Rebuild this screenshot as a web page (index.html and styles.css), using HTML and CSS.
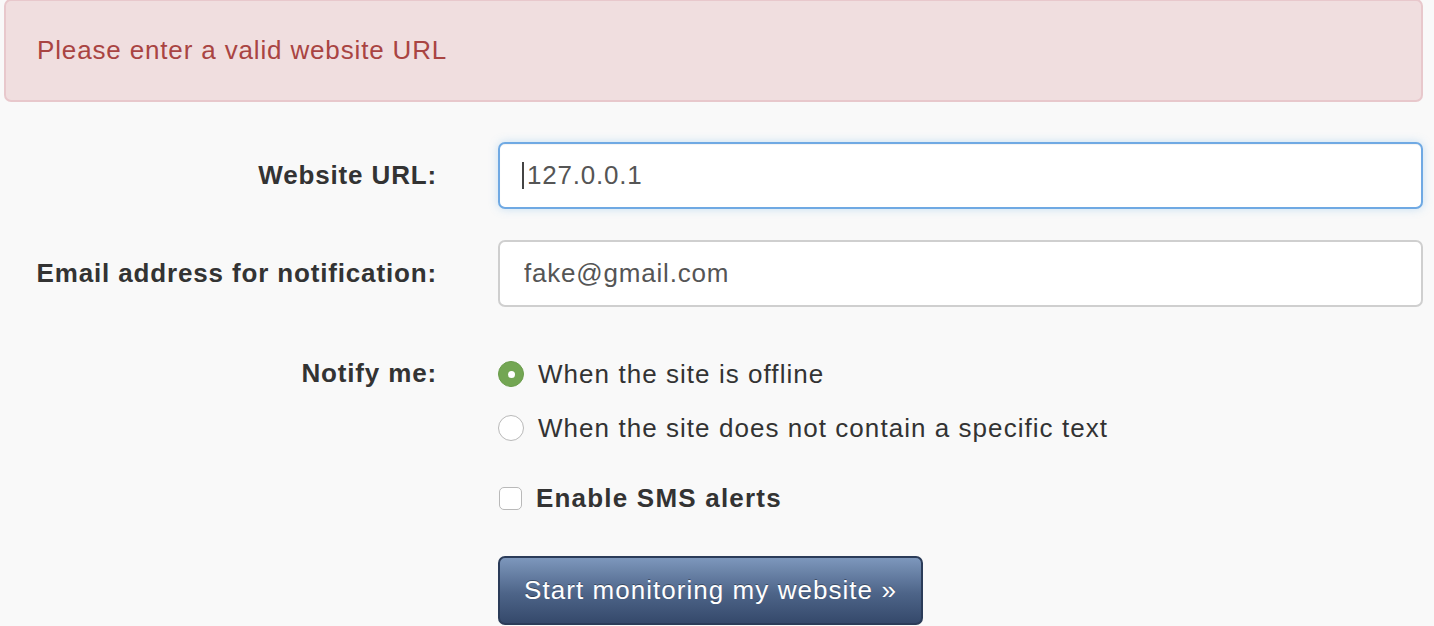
FILE: index.html
```html
<!DOCTYPE html>
<html>
<head>
<meta charset="utf-8">
<link rel="stylesheet" href="styles.css">
</head>
<body>
<div class="alert">Please enter a valid website URL</div>
<form class="form">
  <div class="row">
    <label class="lbl" for="url">Website URL:</label>
    <div class="field">
      <input id="url" class="input focused" type="text" value="127.0.0.1">
      <span class="caret"></span>
    </div>
  </div>
  <div class="row">
    <label class="lbl" for="email">Email address for notification:</label>
    <div class="field">
      <input id="email" class="input" type="text" value="fake@gmail.com">
    </div>
  </div>
  <div class="row row-top">
    <div class="lbl lbl-notify">Notify me:</div>
    <div class="options">
      <label class="opt"><input class="radio" type="radio" name="n" checked><span>When the site is offline</span></label>
      <label class="opt"><input class="radio" type="radio" name="n"><span>When the site does not contain a specific text</span></label>
      <label class="opt opt-sms"><input class="check" type="checkbox"><span class="bold">Enable SMS alerts</span></label>
      <button class="btn" type="button">Start monitoring my website »</button>
    </div>
  </div>
</form>
</body>
</html>
```

FILE: styles.css
```css
html, body {
  margin: 0;
  padding: 0;
  background: #f9f9f9;
  font-family: "Liberation Sans", Arial, sans-serif;
  color: #333;
  overflow: hidden;
}
.alert {
  box-sizing: border-box;
  margin: -1px 11px 0 4px;
  height: 103px;
  padding: 0 31px;
  display: flex;
  align-items: center;
  background: #f0dedf;
  border: 2px solid #e8c8cc;
  border-radius: 7px;
  color: #a94442;
  font-size: 26px;
  letter-spacing: 0.85px;
}
.form {
  display: flex;
  flex-direction: column;
  gap: 31px;
  padding: 40px 11px 0 0;
}
.row {
  display: grid;
  grid-template-columns: 437px 1fr;
  column-gap: 61px;
  align-items: center;
}
.row-top { align-items: start; margin-top: 19px; }
.lbl {
  text-align: right;
  font-weight: bold;
  font-size: 26px;
  letter-spacing: 0.85px;
  color: #333;
}
.lbl-notify { line-height: 30px; margin-top: 1px; }
.field { position: relative; }
.input {
  box-sizing: border-box;
  width: 100%;
  height: 67px;
  margin: 0;
  padding: 0 24px;
  border: 2px solid #cfcfcf;
  border-radius: 7px;
  background: #fff;
  font-family: inherit;
  font-size: 26px;
  letter-spacing: 0.8px;
  color: #555;
  outline: none;
}
.input.focused {
  border-color: #6fa9e3;
  box-shadow: 0 0 10px rgba(102, 175, 233, 0.35), inset 0 1px 1px rgba(0,0,0,.05);
  padding-left: 27px;
}
.caret {
  position: absolute;
  left: 24px;
  top: 20px;
  width: 2px;
  height: 27px;
  background: #444;
}
.options {
  display: flex;
  flex-direction: column;
  align-items: flex-start;
}
.opt {
  display: flex;
  align-items: center;
  gap: 14px;
  font-size: 26px;
  letter-spacing: 1.05px;
  color: #333;
  height: 34px;
  margin-bottom: 20px;
}
.opt-sms { margin-top: 16px; margin-bottom: 41px; }
.bold { font-weight: bold; letter-spacing: 1.2px; }
.radio {
  appearance: none;
  -webkit-appearance: none;
  box-sizing: border-box;
  margin: 0;
  width: 26px;
  height: 26px;
  border-radius: 50%;
  border: 1px solid #b9b9b9;
  background: #fff;
  position: relative;
}
.radio:checked {
  background: #73a653;
  border-color: #6a9c4b;
}
.radio:checked::after {
  content: "";
  position: absolute;
  left: 50%;
  top: 50%;
  width: 7px;
  height: 7px;
  margin: -3.5px 0 0 -3.5px;
  border-radius: 50%;
  background: #fff;
}
.check {
  appearance: none;
  -webkit-appearance: none;
  box-sizing: border-box;
  margin: 0 0 0 1px;
  width: 23px;
  height: 23px;
  border-radius: 5px;
  border: 1px solid #b9b9b9;
  background: #fff;
}
.btn {
  box-sizing: border-box;
  height: 69px;
  padding: 0 24px;
  border: 2px solid #2b3c59;
  border-radius: 7px;
  background: linear-gradient(#7d97bc, #4d6488 55%, #35496b);
  color: #fff;
  font-family: inherit;
  font-size: 26px;
  letter-spacing: 1.05px;
  text-shadow: 0 -1px 0 rgba(0,0,0,.35);
}
```
